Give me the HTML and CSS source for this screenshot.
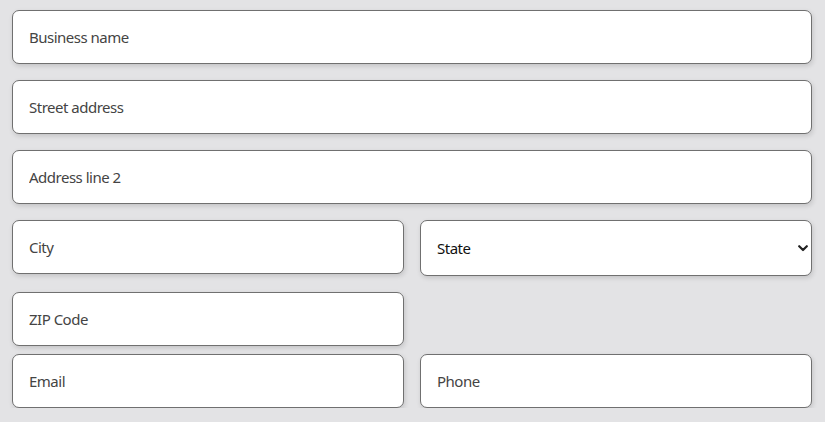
FILE: index.html
```html
<!DOCTYPE html>
<html lang="en">
<head>
    <meta charset="UTF-8">
    <meta name="viewport" content="width=device-width, initial-scale=1.0">
    <title>Business details</title>
    <link rel="stylesheet" href="styles.css">
</head>
<body>
    <form class="address-form">
        <input class="field" type="text" placeholder="Business name">
        <input class="field" type="text" placeholder="Street address">
        <input class="field" type="text" placeholder="Address line 2">

        <div class="row">
            <input class="field" type="text" placeholder="City">
            <div class="select-wrap">
                <select class="field select">
                    <option>State</option>
                </select>
                <svg class="chevron" width="10" height="7" viewBox="0 0 10 7">
                    <path d="M1.2 1.2 L5 5 L8.8 1.2" fill="none" stroke="#222" stroke-width="2.2" stroke-linecap="round" stroke-linejoin="round"/>
                </svg>
            </div>
        </div>

        <div class="row zip-row">
            <input class="field" type="text" placeholder="ZIP Code">
        </div>

        <div class="row">
            <input class="field" type="email" placeholder="Email">
            <input class="field" type="tel" placeholder="Phone">
        </div>
    </form>
</body>
</html>
```

FILE: styles.css
```css
body {
    margin: 0;
    background-color: #e3e3e5;
    font-family: 'Noto Sans', 'Open Sans', sans-serif;
}
.address-form {
    display: flex;
    flex-direction: column;
    gap: 16px;
    padding: 10px 13px 0 12px;
}
.row {
    display: grid;
    grid-template-columns: 1fr 1fr;
    column-gap: 16px;
    align-items: start;
}
.zip-row {
    margin-bottom: -8px;
}
.field {
    box-sizing: border-box;
    width: 100%;
    height: 54px;
    margin: 0;
    padding: 0 16px;
    border: 1px solid #707070;
    border-radius: 7px;
    background-color: #fff;
    box-shadow: 1px 2px 5px rgba(0, 0, 0, 0.14);
    font-family: inherit;
    font-size: 15px;
    letter-spacing: -0.5px;
    color: #222;
    outline: none;
}
.field::placeholder {
    color: #444;
    opacity: 1;
}
.select-wrap {
    position: relative;
}
.select {
    height: 56px;
    appearance: none;
    -webkit-appearance: none;
    color: #111;
}
.chevron {
    position: absolute;
    right: 4px;
    top: 25px;
    pointer-events: none;
}
```
